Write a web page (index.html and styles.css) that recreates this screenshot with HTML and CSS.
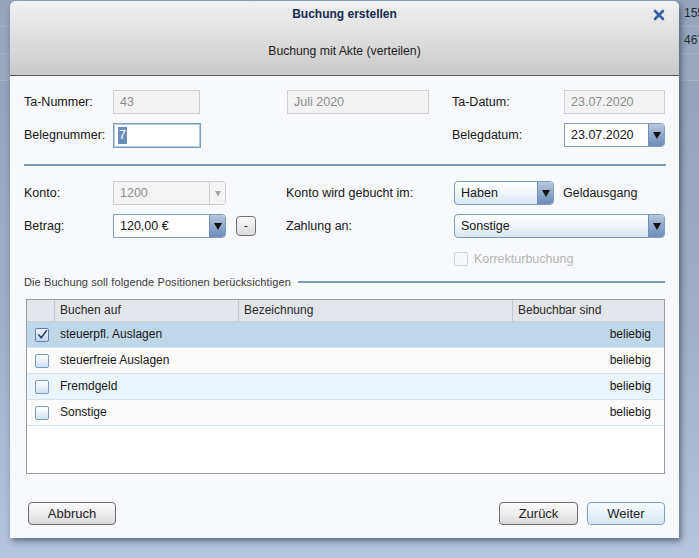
FILE: index.html
```html
<!DOCTYPE html>
<html lang="de">
<head>
<meta charset="utf-8">
<title>Buchung erstellen</title>
<link rel="stylesheet" href="styles.css">
</head>
<body>
<div class="backdrop">
  <div class="bg-row"><span>155</span></div>
  <div class="bg-row"><span>467</span></div>
  <div class="bg-row"></div>
</div>

<div class="dialog">
  <div class="header">
    <div class="title">Buchung erstellen</div>
    <div class="subtitle">Buchung mit Akte (verteilen)</div>
    <svg class="close" width="12" height="12" viewBox="0 0 12 12"><path d="M2 2 L10 10 M10 2 L2 10" stroke="#3562a3" stroke-width="2.6" stroke-linecap="round"/></svg>
  </div>

  <div class="content">
    <div class="top-grid">
      <div class="label">Ta-Nummer:</div>
      <div><div class="field disabled w87">43</div></div>
      <div><div class="field disabled w142">Juli 2020</div></div>
      <div class="label">Ta-Datum:</div>
      <div><div class="field disabled w101">23.07.2020</div></div>

      <div class="label">Belegnummer:</div>
      <div><div class="field focus w88"><span class="sel">7</span></div></div>
      <div></div>
      <div class="label">Belegdatum:</div>
      <div><div class="combo plain w101"><span class="val">23.07.2020</span><span class="btn"><i class="tri"></i></span></div></div>
    </div>

    <div class="sep"></div>

    <div class="mid-grid">
      <div class="label">Konto:</div>
      <div><div class="combo disabled-combo w113"><span class="val">1200</span><span class="btn"><i class="tri"></i></span></div></div>
      <div class="label">Konto wird gebucht im:</div>
      <div class="inline"><div class="combo soft w100"><span class="val">Haben</span><span class="btn"><i class="tri"></i></span></div><span class="after">Geldausgang</span></div>

      <div class="label">Betrag:</div>
      <div class="inline"><div class="combo plain w113"><span class="val">120,00 €</span><span class="btn"><i class="tri"></i></span></div><button class="mini">-</button></div>
      <div class="label">Zahlung an:</div>
      <div><div class="combo soft w211"><span class="val">Sonstige</span><span class="btn"><i class="tri"></i></span></div></div>

      <div></div><div></div><div></div>
      <div class="inline check-row"><span class="cb cb-disabled"></span><span class="dim">Korrekturbuchung</span></div>
    </div>

    <div class="section"><span>Die Buchung soll folgende Positionen berücksichtigen</span><i class="line"></i></div>

    <div class="table">
      <div class="thead">
        <div class="th c0"></div>
        <div class="th c1">Buchen auf</div>
        <div class="th c2">Bezeichnung</div>
        <div class="th c3">Bebuchbar sind</div>
      </div>
      <div class="tr selected">
        <div class="td c0"><span class="cb checked"><svg width="11" height="11" viewBox="0 0 11 11"><path d="M1.5 5.5 L4.2 8.8 L9.8 1.2" fill="none" stroke="#1f3f6e" stroke-width="1.5"/></svg></span></div>
        <div class="td c1">steuerpfl. Auslagen</div>
        <div class="td c2"></div>
        <div class="td c3">beliebig</div>
      </div>
      <div class="tr">
        <div class="td c0"><span class="cb"></span></div>
        <div class="td c1">steuerfreie Auslagen</div>
        <div class="td c2"></div>
        <div class="td c3">beliebig</div>
      </div>
      <div class="tr alt">
        <div class="td c0"><span class="cb"></span></div>
        <div class="td c1">Fremdgeld</div>
        <div class="td c2"></div>
        <div class="td c3">beliebig</div>
      </div>
      <div class="tr">
        <div class="td c0"><span class="cb"></span></div>
        <div class="td c1">Sonstige</div>
        <div class="td c2"></div>
        <div class="td c3">beliebig</div>
      </div>
    </div>

    <div class="buttons">
      <button class="btn-std w88">Abbruch</button>
      <div class="right">
        <button class="btn-std w79">Zurück</button>
        <button class="btn-std primary w78">Weiter</button>
      </div>
    </div>
  </div>
</div>
</body>
</html>
```

FILE: styles.css
```css
* { box-sizing: border-box; }
html, body { margin: 0; padding: 0; }
body {
  width: 699px;
  height: 558px;
  overflow: hidden;
  position: relative;
  font-family: "Liberation Sans", Arial, sans-serif;
  font-size: 12.5px;
  color: #161616;
  background: linear-gradient(180deg, #8e9fb7 0%, #9fb1c9 60%, #b4c6de 100%);
}

.backdrop { width: 699px; }
.bg-row {
  height: 27px;
  border-bottom: 1px solid #a3b2c6;
  padding-left: 684px;
  line-height: 27px;
  color: #1e2a3a;
  font-size: 12px;
  white-space: nowrap;
  overflow: hidden;
  background: rgba(255,255,255,0.06);
}

.dialog {
  position: absolute;
  left: 10px;
  top: 1px;
  width: 669px;
  height: 537px;
  background: #f8f9fc;
  border-radius: 6px 6px 0 0;
  box-shadow: 2px 3px 6px rgba(20, 30, 50, 0.55);
  display: flex;
  flex-direction: column;
}

.header {
  height: 75px;
  border-bottom: 1px solid #5a5a5a;
  border-radius: 6px 6px 0 0;
  background: linear-gradient(180deg, #f1f1f1 0%, #dcdcdc 55%, #c9c9c9 100%);
  position: relative;
  display: flex;
  flex-direction: column;
  align-items: center;
}
.title {
  margin-top: 6px;
  font-weight: bold;
  color: #172a52;
  font-size: 12px;
  line-height: 14px;
}
.subtitle {
  margin-top: 23px;
  font-size: 12.2px;
  line-height: 14px;
  color: #1b1b1b;
}
.close {
  position: absolute;
  left: 643px;
  top: 8px;
}

.content {
  padding: 14px 14px 0 14px;
  flex: 1;
  display: flex;
  flex-direction: column;
}

.top-grid {
  display: grid;
  grid-template-columns: 89px 174px 165px 112px 101px;
  grid-auto-rows: 24px;
  row-gap: 9px;
  align-items: center;
}
.mid-grid {
  display: grid;
  grid-template-columns: 89px 173px 168px 211px;
  grid-auto-rows: 24px;
  row-gap: 9px;
  align-items: center;
  margin-top: 15px;
}
.label { white-space: nowrap; }
.inline { display: flex; align-items: center; }
.after { margin-left: 9px; white-space: nowrap; }

.field {
  height: 24px;
  line-height: 22px;
  padding: 0 6px;
  border: 1px solid #c9c9c9;
  background: #fff;
}
.field.disabled {
  background: #f3f3f3;
  color: #8c8c8c;
  border-color: #cfcfcf;
}
.field.focus {
  height: 25px;
  border: 1px solid #7c9cc6;
  box-shadow: inset 0 0 0 1px #b4cbe6;
  padding-left: 4px;
}
.sel {
  background: #6a8ebc;
  color: #fff;
  padding: 0 1px;
  display: inline-block;
  line-height: 17px;
  margin-top: 3px;
}

.w87 { width: 87px; }
.w88 { width: 88px; }
.w142 { width: 142px; }
.w101 { width: 101px; }
.w100 { width: 100px; }
.w113 { width: 113px; }
.w211 { width: 211px; }
.w79 { width: 79px; }
.w78 { width: 78px; }

.combo {
  height: 24px;
  display: flex;
  border: 1px solid #7f9cc3;
  border-radius: 4px;
  overflow: hidden;
}
.combo .val {
  flex: 1;
  padding-left: 6px;
  line-height: 22px;
  white-space: nowrap;
}
.combo .btn {
  width: 16px;
  border-left: 1px solid #6f8fbb;
  background: linear-gradient(180deg, #b7c8de 0%, #8ea8cb 50%, #6f8db8 100%);
  display: flex;
  align-items: center;
  justify-content: center;
}
.tri {
  width: 0; height: 0;
  border-left: 4px solid transparent;
  border-right: 4px solid transparent;
  border-top: 7px solid #111;
  margin-top: 1px;
}
.combo.plain { background: #fff; border-radius: 0 4px 4px 0; }
.combo.soft { background: linear-gradient(180deg, #ffffff 0%, #f2f7fc 45%, #d8e6f3 100%); }
.combo.disabled-combo {
  background: #f4f4f4;
  border-color: #cccccc;
  color: #8f8f8f;
  border-radius: 0 4px 4px 0;
}
.combo.disabled-combo .btn {
  background: #f4f4f4;
  border-left-color: #d0d0d0;
}
.combo.disabled-combo .tri { border-top-color: #a8a8a8; border-left-width: 3px; border-right-width: 3px; border-top-width: 6px; }

.mini {
  margin-left: 10px;
  width: 20px;
  height: 20px;
  padding: 0;
  border: 1px solid #6f6f6f;
  border-radius: 4px;
  background: linear-gradient(180deg, #fbfbfb 0%, #e9e9e9 60%, #d9d9d9 100%);
  font-family: "Liberation Sans", Arial, sans-serif;
  font-size: 12px;
  line-height: 16px;
  color: #222;
}

.check-row { height: 14px; }
.cb {
  width: 14px;
  height: 14px;
  border: 1px solid #7a9cc6;
  border-radius: 2px;
  background: linear-gradient(180deg, #ffffff 0%, #e9f1f9 50%, #d3e1ef 100%);
  display: inline-flex;
  align-items: center;
  justify-content: center;
}
.cb-disabled { border-color: #c8d4e2; background: #f6f8fb; }
.dim { color: #b5b5b5; margin-left: 6px; white-space: nowrap; }

.sep {
  height: 2px;
  background: #7d9bb8;
  margin-top: 17px;
  width: 642px;
}

.section {
  display: flex;
  align-items: center;
  margin-top: 4px;
  font-family: "Liberation Sans", Arial, sans-serif;
  font-size: 11px;
  letter-spacing: 0.1px;
  color: #3a3a3a;
  height: 14px;
}
.section span { white-space: nowrap; }
.section .line {
  flex: 1;
  height: 2px;
  background: #7d9bb8;
  margin-left: 7px;
}

.table {
  margin-top: 10px;
  margin-left: 2px;
  width: 639px;
  height: 175px;
  border: 1px solid #9c9c9c;
  background: #fff;
  font-size: 12px;
}
.thead {
  display: flex;
  height: 22px;
  background: #e2e5e9;
  border-bottom: 1px solid #c9ccd1;
  color: #2a2a2a;
}
.th {
  line-height: 21px;
  padding-left: 5px;
  border-right: 1px solid #c3c6cb;
  white-space: nowrap;
}
.th.c3 { border-right: none; }
.c0 { width: 28px; flex: none; }
.c1 { width: 184px; flex: none; }
.c2 { width: 274px; flex: none; }
.c3 { flex: 1; }
.tr {
  display: flex;
  height: 26px;
  background: #fcfcfc;
  border-bottom: 1px solid #d6e4f0;
}
.tr.alt { background: #ebf4fb; }
.tr.selected { background: #bed8ea; }
.td {
  line-height: 25px;
  padding-left: 5px;
  white-space: nowrap;
}
.td.c0 { padding-left: 8px; display: flex; align-items: center; }
.td.c3 { text-align: right; padding-right: 13px; }
.cb.checked { background: linear-gradient(180deg, #eef4fa 0%, #c4d6ea 100%); border-color: #5b7fb0; }

.buttons {
  margin-top: 28px;
  display: flex;
  justify-content: space-between;
  padding-left: 4px;
}
.right { display: flex; gap: 9px; }
.btn-std {
  height: 23px;
  padding: 0;
  border: 1px solid #6c6c6c;
  border-radius: 4px;
  background: linear-gradient(180deg, #fafafa 0%, #ececec 55%, #d9d9d9 100%);
  font-family: "Liberation Sans", Arial, sans-serif;
  font-size: 13px;
  color: #222;
  line-height: 20px;
}
.btn-std.primary {
  border-color: #7fa0cc;
  background: linear-gradient(180deg, #f7fbff 0%, #e7f1fa 55%, #d4e5f3 100%);
}
```
